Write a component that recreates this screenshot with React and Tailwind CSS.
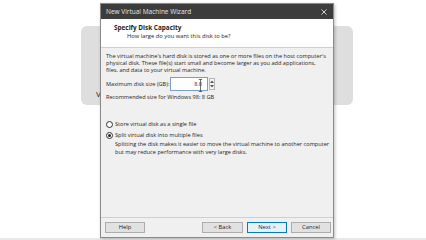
export default function App() {
  return (
    <div className="relative h-[240px] w-[426px] overflow-hidden bg-white font-['Open_Sans',sans-serif] text-[#1e1e1e]">
      {/* window behind the dialog */}
      <div className="absolute left-[81px] top-[26px] h-[79px] w-[272px] rounded-[6px] bg-[#dedede]">
        <span className="absolute left-[15px] top-[62px] text-[8px]">V</span>
      </div>
      <div className="absolute bottom-0 left-0 h-[2px] w-full bg-[#e8e8e8]" />

      {/* wizard dialog */}
      <div className="absolute left-[100px] top-[3px] flex h-[235px] w-[234px] flex-col border border-[#8a8a8a] bg-[#f0f0f0] shadow-[1px_1px_3px_rgba(0,0,0,0.25)]">
        <div className="flex h-[15px] shrink-0 items-center justify-between bg-[#3c3c3c] pl-[5px] pr-[6px] text-[6.5px] text-[#e6e6e6]">
          <span>New Virtual Machine Wizard</span>
          <svg width="6" height="6" viewBox="0 0 6 6" stroke="#d0d0d0" strokeWidth="1">
            <path d="M0.5 0.5 L5.5 5.5 M5.5 0.5 L0.5 5.5" />
          </svg>
        </div>

        <div className="h-[29px] shrink-0 border-b border-[#cfcfcf] bg-white pl-[13px] pt-[4px] leading-[9px]">
          <div className="text-[6.4px] font-bold">Specify Disk Capacity</div>
          <div className="pl-[13px] text-[5.8px]">How large do you want this disk to be?</div>
        </div>

        <div className="flex-1 whitespace-nowrap px-[5px] pt-[5px] text-[5.6px] leading-[7px]">
          <p>
            The virtual machine's hard disk is stored as one or more files on the host computer's
            <br />
            physical disk. These file(s) start small and become larger as you add applications,
            <br />
            files, and data to your virtual machine.
          </p>

          <div className="mt-[3px] flex items-center">
            <span className="w-[64px]">Maximum disk size (GB):</span>
            <div className="relative flex h-[14px] w-[38px] items-center justify-end border border-[#7a9cd3] bg-white pr-[5px]">
              <span>8.0</span>
              <svg className="absolute left-[27px] top-[1px]" width="5" height="13" viewBox="0 0 5 13" stroke="#333" strokeWidth="0.7" fill="none">
                <path d="M0.8 0.5 H4.2 M2.5 0.5 V12.5 M0.8 12.5 H4.2" />
              </svg>
            </div>
            <div className="ml-[1px] flex h-[12px] w-[6px] flex-col items-center justify-around border border-[#b5b5b5] bg-[#f5f5f5]">
              <svg width="4" height="3" viewBox="0 0 4 3"><path d="M0 3 L2 0.5 L4 3 Z" fill="#555" /></svg>
              <svg width="4" height="3" viewBox="0 0 4 3"><path d="M0 0 L2 2.5 L4 0 Z" fill="#555" /></svg>
            </div>
          </div>

          <div className="mt-[3px]">Recommended size for Windows 98: 8 GB</div>

          <div className="mt-[20px] flex items-center gap-[2px]">
            <span className="h-[7px] w-[7px] rounded-full border border-[#333] bg-white" />
            <span>Store virtual disk as a single file</span>
          </div>
          <div className="mt-[4px] flex items-center gap-[2px]">
            <span className="flex h-[7px] w-[7px] items-center justify-center rounded-full border border-[#333] bg-white">
              <span className="h-[3px] w-[3px] rounded-full bg-[#222]" />
            </span>
            <span>Split virtual disk into multiple files</span>
          </div>
          <p className="mt-[2px] pl-[9px] leading-[7.5px]">
            Splitting the disk makes it easier to move the virtual machine to another computer
            <br />
            but may reduce performance with very large disks.
          </p>
        </div>

        <div className="flex h-[20px] shrink-0 items-center border-t border-[#cfcfcf] pl-[4px] pr-[2px] text-[5.8px]">
          <button className="h-[11px] w-[40px] border border-[#adadad] bg-[#e1e1e1] leading-none">Help</button>
          <div className="ml-auto flex gap-[4px]">
            <button className="h-[11px] w-[41px] border border-[#adadad] bg-[#e1e1e1] leading-none">&lt; Back</button>
            <button className="h-[11px] w-[40px] border border-[#0078d7] bg-[#e5f1fb] leading-none">Next &gt;</button>
            <button className="h-[11px] w-[40px] border border-[#adadad] bg-[#e1e1e1] leading-none">Cancel</button>
          </div>
        </div>
      </div>
    </div>
  );
}
